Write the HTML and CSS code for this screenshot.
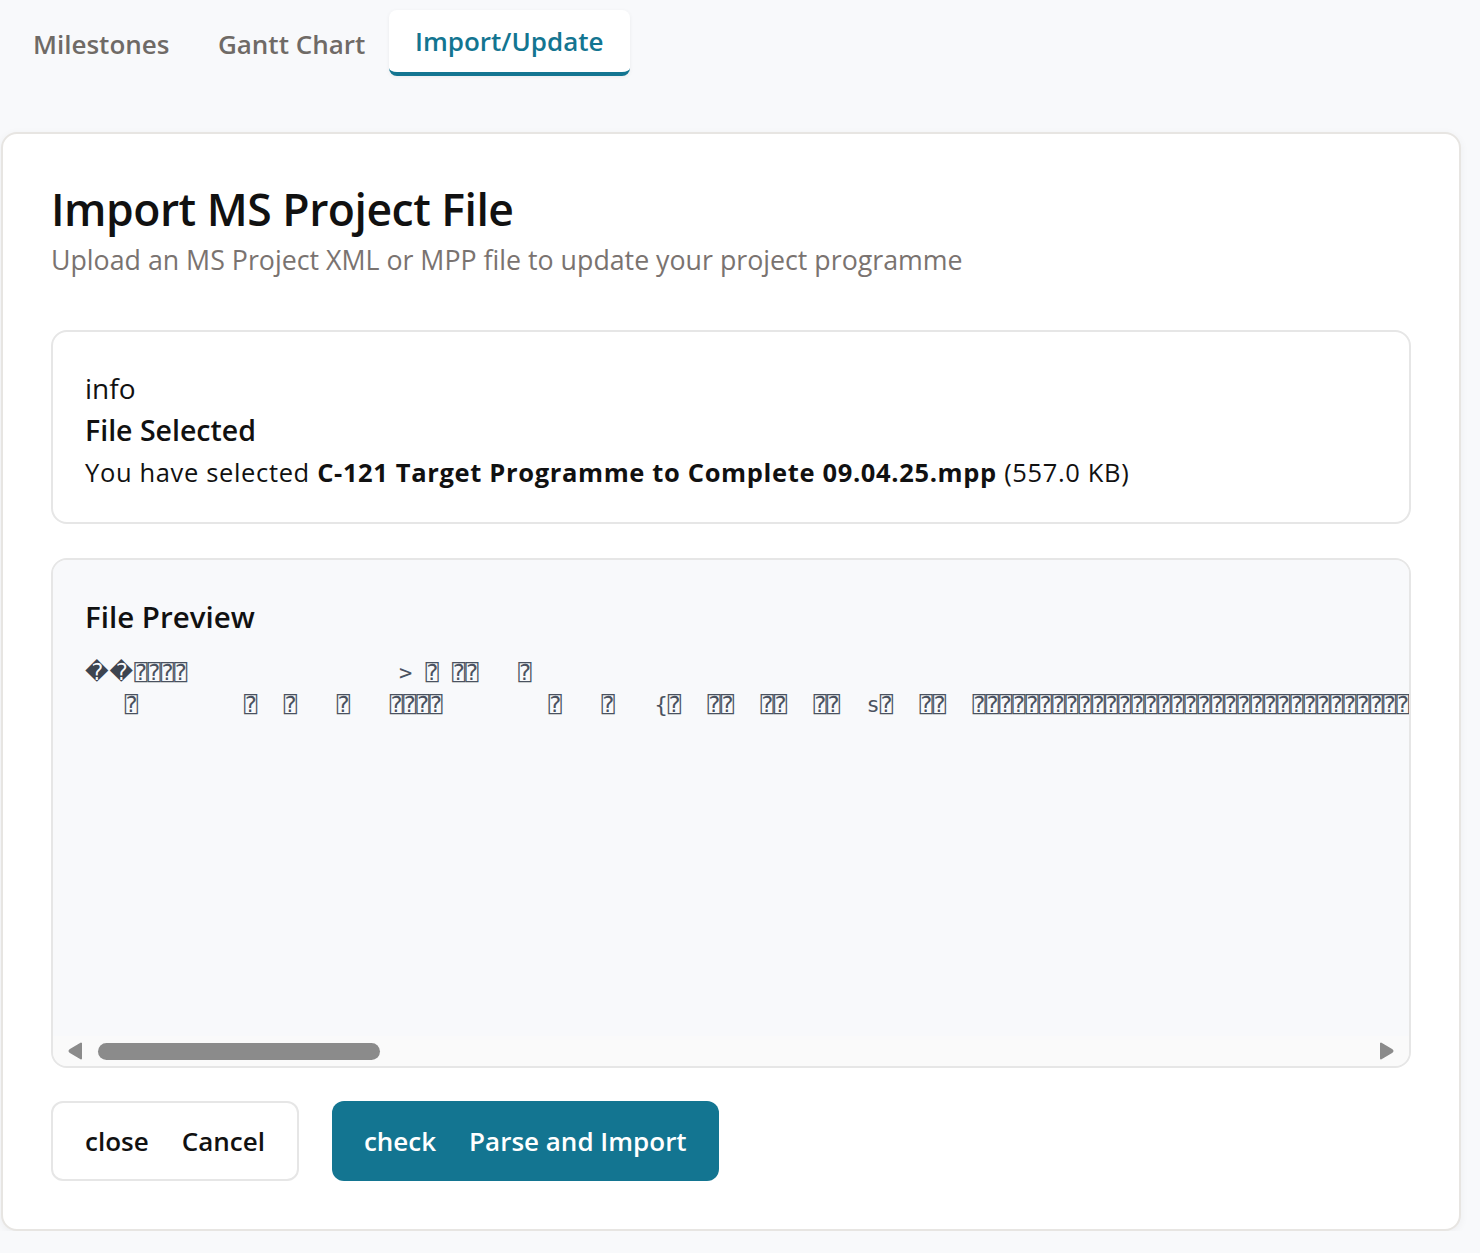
FILE: index.html
```html
<!DOCTYPE html>
<html lang="en">
<head>
<meta charset="utf-8">
<title>Import/Update</title>
<link rel="stylesheet" href="styles.css">
</head>
<body>
<nav class="tabs">
  <button class="tab">Milestones</button>
  <button class="tab">Gantt Chart</button>
  <button class="tab tab-active">Import/Update</button>
</nav>

<main class="card">
  <header class="card-head">
    <h1 class="title">Import MS Project File</h1>
    <p class="subtitle">Upload an MS Project XML or MPP file to update your project programme</p>
  </header>

  <section class="info-box">
    <div class="info-icon">info</div>
    <h2 class="info-title">File Selected</h2>
    <p class="info-text">You have selected <strong>C-121 Target Programme to Complete 09.04.25.mpp</strong> (557.0 KB)</p>
  </section>

  <section class="preview">
    <div class="preview-body">
      <h2 class="preview-title">File Preview</h2>
<pre class="preview-pre"><span class="rep">&#xFFFD;&#xFFFD;</span>⍰⍰⍰⍰                > ⍰ ⍰⍰   ⍰
   ⍰        ⍰  ⍰   ⍰   ⍰⍰⍰⍰        ⍰   ⍰   {⍰  ⍰⍰  ⍰⍰  ⍰⍰  s⍰  ⍰⍰  ⍰⍰⍰⍰⍰⍰⍰⍰⍰⍰⍰⍰⍰⍰⍰⍰⍰⍰⍰⍰⍰⍰⍰⍰⍰⍰⍰⍰⍰⍰⍰⍰⍰⍰⍰⍰⍰⍰⍰⍰⍰⍰⍰⍰⍰⍰⍰⍰⍰⍰⍰⍰⍰⍰⍰⍰⍰⍰⍰⍰⍰⍰⍰⍰⍰⍰⍰⍰</pre>
    </div>
    <div class="hscroll">
      <svg class="arrow" width="14" height="18" viewBox="0 0 14 18"><path d="M13 1.5 V16.5 L2 9.8 Q1 9 2 8.2 Z" fill="#8b8b8b" stroke="#8b8b8b" stroke-width="2" stroke-linejoin="round"/></svg>
      <div class="track"><div class="thumb"></div></div>
      <svg class="arrow" width="14" height="18" viewBox="0 0 14 18"><path d="M1 1.5 V16.5 L12 9.8 Q13 9 12 8.2 Z" fill="#8b8b8b" stroke="#8b8b8b" stroke-width="2" stroke-linejoin="round"/></svg>
    </div>
  </section>

  <div class="actions">
    <button class="btn btn-outline"><span class="btn-icon">close</span><span>Cancel</span></button>
    <button class="btn btn-primary"><span class="btn-icon">check</span><span>Parse and Import</span></button>
  </div>
</main>
</body>
</html>
```

FILE: styles.css
```css
* { box-sizing: border-box; }

html, body {
  margin: 0;
  padding: 0;
  background: #f8f9fb;
  font-family: "Open Sans", "Noto Sans", sans-serif;
  color: #111111;
}

.tabs {
  display: flex;
  padding: 10px 0 0 8px;
  height: 76px;
}

.tab {
  font-family: inherit;
  font-size: 26px;
  font-weight: 600;
  color: #6f6a66;
  background: transparent;
  border: none;
  padding: 2px 23.5px 0 25px;
  height: 66px;
  cursor: pointer;
}

.tab-active {
  color: #137591;
  background: #ffffff;
  border-radius: 8px;
  border-bottom: 4px solid #137591;
  box-shadow: 0 1px 4px rgba(0, 0, 0, 0.06);
  width: 241px;
  padding: 0 24px;
}

.card {
  margin: 56px 0 0 1px;
  width: 1460px;
  background: #ffffff;
  border: 2px solid #e7e5e2;
  border-radius: 16px;
  box-shadow: 0 2px 8px rgba(0, 0, 0, 0.05);
  padding: 48px;
}

.card-head {
  margin-bottom: 52px;
}

.title {
  margin: 0;
  font-size: 44.5px;
  font-weight: 600;
  line-height: 1.2;
  letter-spacing: -0.5px;
  color: #111111;
}

.subtitle {
  margin: 7px 0 0;
  font-size: 26.75px;
  line-height: 36px;
  color: #7a7370;
}

.info-box {
  border: 2px solid #e6e6e6;
  border-radius: 16px;
  padding: 38px 32px 32px;
}

.info-icon {
  font-size: 28px;
  line-height: 36px;
}

.info-title {
  margin: 4px 0 0;
  font-size: 28.5px;
  font-weight: 600;
  line-height: 40px;
}

.info-text {
  margin: 4px 0 0;
  font-size: 25.5px;
  letter-spacing: 0.65px;
  line-height: 36px;
}

.info-text strong { font-weight: 700; }

.preview {
  margin-top: 34px;
  border: 2px solid #e6e6e6;
  border-radius: 16px;
  overflow: hidden;
  background: #fafafa;
}

.preview-body {
  height: 476px;
  background: #f8f9fb;
  padding: 39px 32px 0;
  overflow: hidden;
}

.preview-title {
  margin: 0;
  font-size: 29.5px;
  font-weight: 600;
  line-height: 36px;
}

.preview-pre {
  margin: 22px 0 0;
  font-family: "DejaVu Sans Mono", monospace;
  font-size: 22px;
  line-height: 32px;
  color: #4a5260;
  white-space: pre;
}

.rep {
  font-family: "DejaVu Sans", sans-serif;
  font-size: 23px;
  line-height: 1;
  letter-spacing: 1px;
  color: #3d4450;
}

.hscroll {
  display: flex;
  align-items: center;
  height: 30px;
  padding: 0 15px;
  background: #fafafa;
}

.arrow { flex: none; }

.track {
  flex: 1;
  padding: 0 14px 0 16px;
}

.thumb {
  width: 282px;
  height: 17px;
  border-radius: 9px;
  background: #8b8b8b;
}

.actions {
  display: flex;
  gap: 33px;
  margin-top: 33px;
}

.btn {
  display: flex;
  align-items: center;
  gap: 33px;
  height: 80px;
  padding: 0 32px;
  border-radius: 12px;
  font-family: inherit;
  font-size: 26px;
  font-weight: 600;
  cursor: pointer;
}

.btn-outline {
  background: #ffffff;
  color: #111111;
  border: 2px solid #e6e6e6;
}

.btn-primary {
  background: #137591;
  color: #ffffff;
  border: none;
}
```
